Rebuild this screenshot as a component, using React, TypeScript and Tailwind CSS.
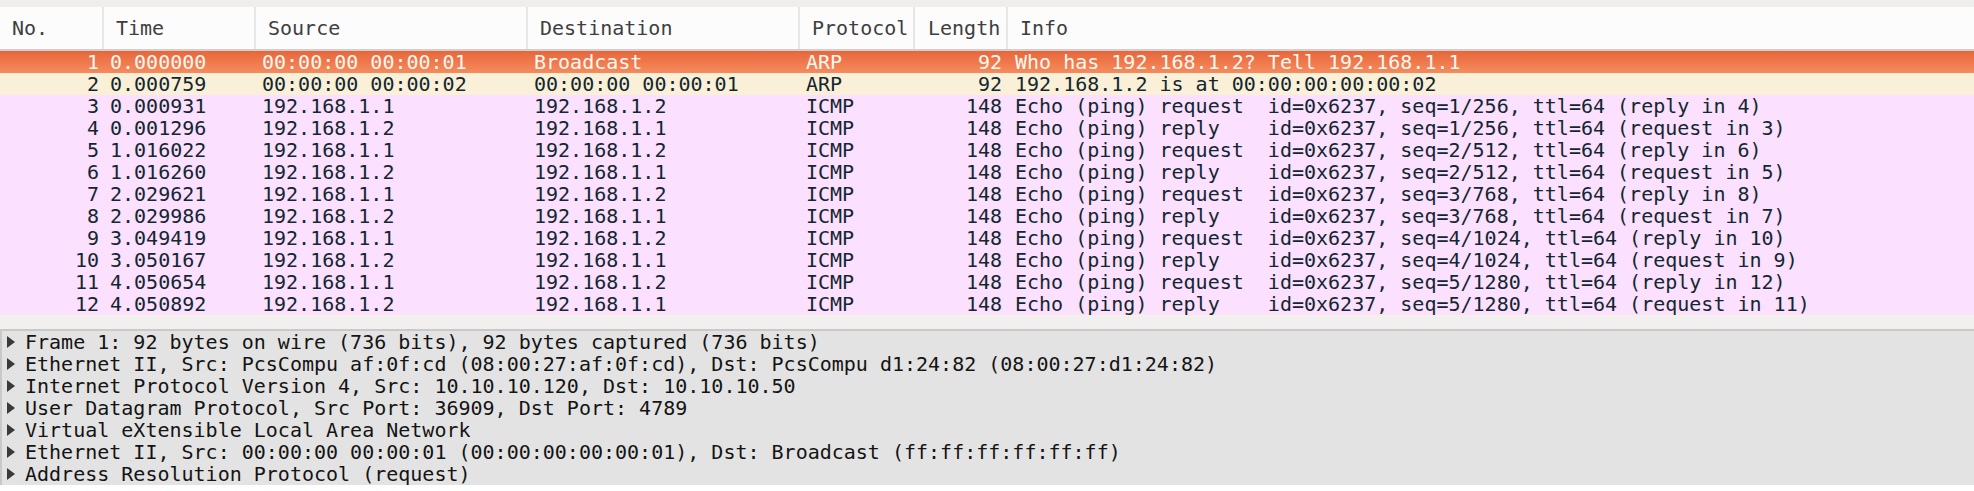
import React from "react";

type Pkt = { no: number; time: string; src: string; dst: string; proto: string; len: number; info: string; kind: "sel" | "arp" | "icmp" };

const packets: Pkt[] = [
  { no: 1, time: "0.000000", src: "00:00:00 00:00:01", dst: "Broadcast", proto: "ARP", len: 92, info: "Who has 192.168.1.2? Tell 192.168.1.1", kind: "sel" },
  { no: 2, time: "0.000759", src: "00:00:00 00:00:02", dst: "00:00:00 00:00:01", proto: "ARP", len: 92, info: "192.168.1.2 is at 00:00:00:00:00:02", kind: "arp" },
  { no: 3, time: "0.000931", src: "192.168.1.1", dst: "192.168.1.2", proto: "ICMP", len: 148, info: "Echo (ping) request  id=0x6237, seq=1/256, ttl=64 (reply in 4)", kind: "icmp" },
  { no: 4, time: "0.001296", src: "192.168.1.2", dst: "192.168.1.1", proto: "ICMP", len: 148, info: "Echo (ping) reply    id=0x6237, seq=1/256, ttl=64 (request in 3)", kind: "icmp" },
  { no: 5, time: "1.016022", src: "192.168.1.1", dst: "192.168.1.2", proto: "ICMP", len: 148, info: "Echo (ping) request  id=0x6237, seq=2/512, ttl=64 (reply in 6)", kind: "icmp" },
  { no: 6, time: "1.016260", src: "192.168.1.2", dst: "192.168.1.1", proto: "ICMP", len: 148, info: "Echo (ping) reply    id=0x6237, seq=2/512, ttl=64 (request in 5)", kind: "icmp" },
  { no: 7, time: "2.029621", src: "192.168.1.1", dst: "192.168.1.2", proto: "ICMP", len: 148, info: "Echo (ping) request  id=0x6237, seq=3/768, ttl=64 (reply in 8)", kind: "icmp" },
  { no: 8, time: "2.029986", src: "192.168.1.2", dst: "192.168.1.1", proto: "ICMP", len: 148, info: "Echo (ping) reply    id=0x6237, seq=3/768, ttl=64 (request in 7)", kind: "icmp" },
  { no: 9, time: "3.049419", src: "192.168.1.1", dst: "192.168.1.2", proto: "ICMP", len: 148, info: "Echo (ping) request  id=0x6237, seq=4/1024, ttl=64 (reply in 10)", kind: "icmp" },
  { no: 10, time: "3.050167", src: "192.168.1.2", dst: "192.168.1.1", proto: "ICMP", len: 148, info: "Echo (ping) reply    id=0x6237, seq=4/1024, ttl=64 (request in 9)", kind: "icmp" },
  { no: 11, time: "4.050654", src: "192.168.1.1", dst: "192.168.1.2", proto: "ICMP", len: 148, info: "Echo (ping) request  id=0x6237, seq=5/1280, ttl=64 (reply in 12)", kind: "icmp" },
  { no: 12, time: "4.050892", src: "192.168.1.2", dst: "192.168.1.1", proto: "ICMP", len: 148, info: "Echo (ping) reply    id=0x6237, seq=5/1280, ttl=64 (request in 11)", kind: "icmp" },
];

const details = [
  "Frame 1: 92 bytes on wire (736 bits), 92 bytes captured (736 bits)",
  "Ethernet II, Src: PcsCompu af:0f:cd (08:00:27:af:0f:cd), Dst: PcsCompu d1:24:82 (08:00:27:d1:24:82)",
  "Internet Protocol Version 4, Src: 10.10.10.120, Dst: 10.10.10.50",
  "User Datagram Protocol, Src Port: 36909, Dst Port: 4789",
  "Virtual eXtensible Local Area Network",
  "Ethernet II, Src: 00:00:00 00:00:01 (00:00:00:00:00:01), Dst: Broadcast (ff:ff:ff:ff:ff:ff)",
  "Address Resolution Protocol (request)",
];

function rowClass(kind: Pkt["kind"]) {
  if (kind === "sel") return "bg-gradient-to-b from-[#e7663a] to-[#f68b5d] text-[#fff8f2]";
  if (kind === "arp") return "bg-[#faf0d7] text-[#12272e]";
  return "bg-[#fce0ff] text-[#12272e]";
}

const Triangle = () => (
  <svg width="8" height="12" viewBox="0 0 8 12" className="shrink-0">
    <polygon points="0,0 8,6 0,12" fill="#3a3a3a" />
  </svg>
);

export default function App() {
  return (
    <div className="w-[1974px] h-[491px] bg-white font-['DejaVu_Sans_Mono',monospace] text-[20px] leading-[22px] overflow-hidden">
      <div className="h-[7px] bg-[#efeeec]" />
      <div className="flex h-[44px] bg-[#fcfcfc] border-b-2 border-[#cfcfcf] text-[#3f3f3f]">
        <div className="w-[104px] shrink-0 pl-[12px] flex items-center border-r-2 border-[#e6e6e6]">No.</div>
        <div className="w-[152px] shrink-0 pl-[12px] flex items-center border-r-2 border-[#e6e6e6]">Time</div>
        <div className="w-[272px] shrink-0 pl-[12px] flex items-center border-r-2 border-[#e6e6e6]">Source</div>
        <div className="w-[272px] shrink-0 pl-[12px] flex items-center border-r-2 border-[#e6e6e6]">Destination</div>
        <div className="w-[115px] shrink-0 pl-[12px] flex items-center border-r-2 border-[#e6e6e6]">Protocol</div>
        <div className="w-[93px] shrink-0 pl-[13px] flex items-center border-r-2 border-[#e6e6e6]">Length</div>
        <div className="flex-1 pl-[12px] flex items-center">Info</div>
      </div>
      <div>
        {packets.map((p) => (
          <div key={p.no} className={`flex h-[22px] whitespace-pre ${rowClass(p.kind)}`}>
            <div className="w-[104px] shrink-0 pr-[5px] text-right">{p.no}</div>
            <div className="w-[152px] shrink-0 pl-[6px]">{p.time}</div>
            <div className="w-[272px] shrink-0 pl-[6px]">{p.src}</div>
            <div className="w-[272px] shrink-0 pl-[6px]">{p.dst}</div>
            <div className="w-[115px] shrink-0 pl-[6px]">{p.proto}</div>
            <div className="w-[93px] shrink-0 pr-[6px] text-right">{p.len}</div>
            <div className="flex-1 pl-[7px]">{p.info}</div>
          </div>
        ))}
      </div>
      <div className="h-[14px] bg-[#f2f0ee] border-t border-[#f8f1df]" />
      <div className="h-[156px] bg-[#e3e3e3] border-t-2 border-l-2 border-[#c9c9c9] text-[#141414]">
        {details.map((d) => (
          <div key={d} className="flex items-center h-[22px] pl-[5px] whitespace-pre">
            <Triangle />
            <span className="ml-[10px]">{d}</span>
          </div>
        ))}
      </div>
    </div>
  );
}
